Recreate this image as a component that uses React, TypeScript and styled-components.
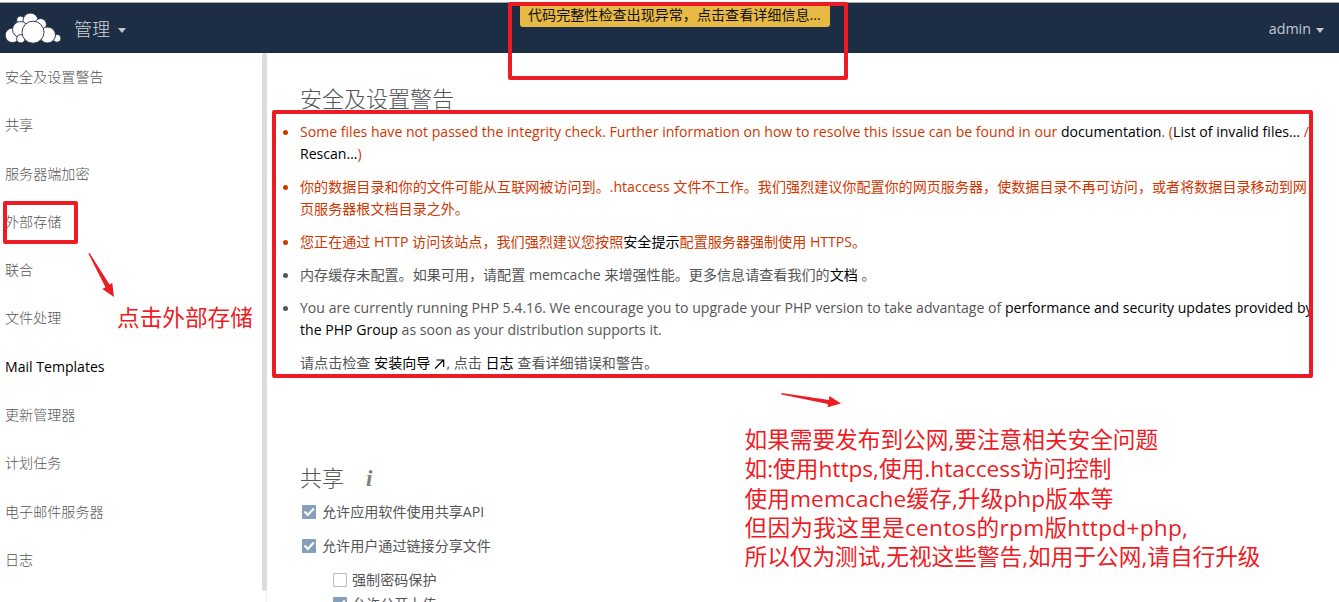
import React from 'react';
import styled, { createGlobalStyle } from 'styled-components';

const RED = '#ed1c24';

const GlobalStyle = createGlobalStyle`
  * { box-sizing: border-box; }
  body {
    margin: 0;
    background: #fff;
    color: #555;
    font-family: 'Open Sans', 'Noto Sans CJK SC', sans-serif;
    font-size: 14.08px;
    line-height: 22px;
    overflow: hidden;
  }
`;

const Page = styled.div`
  position: relative;
  height: 602px;
  overflow: hidden;
  display: flex;
  flex-direction: column;
`;

const Header = styled.header`
  flex: none;
  height: 53px;
  border-top: 2px solid #fff;
  box-shadow: inset 0 1px 0 #a3a7b0;
  background: #1d2d44;
  color: #c3c8d0;
  display: flex;
  align-items: center;
  justify-content: space-between;
  padding: 2px 15px 0 5px;
`;

const Brand = styled.div`
  display: flex;
  align-items: center;
`;

const AppName = styled.span`
  margin-left: 13px;
  font-size: 18px;
  font-weight: 300;
  color: #d3d7dc;
`;

const Caret = styled.i<{ $gap: number }>`
  display: inline-block;
  margin: 3px 0 0 ${(p) => p.$gap}px;
  border: 4.5px solid transparent;
  border-top: 5px solid #c3c8d0;
  border-bottom: 0;
`;

const Account = styled.div`
  display: flex;
  align-items: center;
  font-size: 14.3px;
`;

const Notice = styled.div`
  position: absolute;
  left: 520px;
  top: 3px;
  width: 310px;
  height: 24px;
  padding-left: 8px;
  border-radius: 0 0 3px 3px;
  background: #e8b945;
  color: #111;
  line-height: 24px;
  white-space: nowrap;
`;

const Body = styled.div`
  flex: 1;
  min-height: 0;
  display: flex;
`;

const Sidebar = styled.nav`
  flex: none;
  width: 262px;
  padding: 0 0 0 5px;
`;

const NavItem = styled.div<{ $active?: boolean }>`
  height: 48.3px;
  line-height: 48px;
  font-size: 14.08px;
  font-weight: ${(p) => (p.$active ? 400 : 300)};
  color: ${(p) => (p.$active ? '#000' : '#555')};
`;

const ScrollTrack = styled.div`
  flex: none;
  width: 5px;
  border-right: 1px solid #eee;
`;

const ScrollThumb = styled.div`
  width: 5px;
  height: 538px;
  border-radius: 2px;
  background: #dcdcdc;
`;

const Content = styled.main`
  flex: 1;
  min-width: 0;
  padding: 33px 0 0 33px;
`;

const Heading = styled.h2`
  display: flex;
  align-items: center;
  margin: 0;
  height: 24px;
  font-size: 22px;
  font-weight: 300;
  line-height: 24px;
`;

const Info = styled.span`
  margin: 3px 0 0 22px;
  font: italic bold 23px 'Liberation Serif', serif;
  color: #808080;
`;

const Warnings = styled.ul`
  margin: 11px 0 0;
  padding: 0;
  list-style: none;
`;

const Warning = styled.li<{ $danger?: boolean }>`
  display: flex;
  margin-bottom: 11px;
  color: ${(p) => (p.$danger ? '#ce3702' : '#555')};
  &::before {
    content: '';
    flex: none;
    width: 5px;
    height: 5px;
    margin: 9px 12px 0 -17px;
    border-radius: 50%;
    background: currentColor;
  }
`;

const Line = styled.div<{ $track?: number }>`
  white-space: nowrap;
  letter-spacing: ${(p) => p.$track ?? 0}px;
`;

const Link = styled.a`
  color: #000;
`;

const ArrowGlyph = styled.svg`
  width: 11px;
  height: 10px;
  margin: 0 1px 0 4px;
  vertical-align: -1px;
`;

const Sharing = styled.section`
  margin-top: 91px;
`;

const Option = styled.label<{ $top: number; $indent?: boolean }>`
  display: flex;
  align-items: center;
  height: 22px;
  margin: ${(p) => p.$top}px 0 0 ${(p) => (p.$indent ? 33 : 2)}px;
  gap: ${(p) => (p.$indent ? 5 : 6)}px;
`;

const Box = styled.span<{ $on?: boolean }>`
  flex: none;
  display: flex;
  width: 14px;
  height: 14px;
  border-radius: 1px;
  border: ${(p) => (p.$on ? 'none' : '1px solid #bbb')};
  background: ${(p) => (p.$on ? '#869fba' : '#fff')};
`;

const Frame = styled.div<{ $x: number; $y: number; $w: number; $h: number }>`
  position: absolute;
  left: ${(p) => p.$x}px;
  top: ${(p) => p.$y}px;
  width: ${(p) => p.$w}px;
  height: ${(p) => p.$h}px;
  border: 4px solid ${RED};
  border-radius: 2px;
`;

const Note = styled.div<{ $x: number; $y: number }>`
  position: absolute;
  left: ${(p) => p.$x}px;
  top: ${(p) => p.$y}px;
  color: ${RED};
  font-size: 22.67px;
  line-height: 29.33px;
`;

const Pointers = styled.svg`
  position: absolute;
  left: 0;
  top: 0;
  pointer-events: none;
`;

function Check({ on }: { on?: boolean }) {
  return (
    <Box $on={on}>
      {on && (
        <svg width="14" height="14" viewBox="0 0 14 14">
          <path d="M2.5 6.5 5.8 10 11.8 3.6" fill="none" stroke="#fff" strokeWidth="2.2" />
        </svg>
      )}
    </Box>
  );
}

function CloudLogo() {
  const puffs: [number, number, number][] = [
    [15.5, 7, 3.9], [25.5, 7.5, 7.5], [35.5, 11.5, 6],
    [7.5, 22.3, 7.3], [15.5, 16.5, 8], [15.8, 25.8, 4.1],
    [52, 25.3, 4], [42.5, 22, 8], [28, 19.2, 11],
  ];
  return (
    <svg width="56" height="31" viewBox="0 0 56 31">
      {puffs.map(([x, y, r]) => (
        <circle key={`${x}-${y}`} cx={x} cy={y} r={r} fill="#fff" stroke="#1d2d44" strokeWidth="0.9" />
      ))}
    </svg>
  );
}

const navItems = [
  '安全及设置警告', '共享', '服务器端加密', '外部存储', '联合', '文件处理',
  'Mail Templates', '更新管理器', '计划任务', '电子邮件服务器', '日志',
];

const noteLines: [string, number][] = [
  ['如果需要发布到公网,要注意相关安全问题', 0],
  ['如:使用https,使用.htaccess访问控制', 0],
  ['使用memcache缓存,升级php版本等', 0.1],
  ['但因为我这里是centos的rpm版httpd+php,', 0.27],
  ['所以仅为测试,无视这些警告,如用于公网,请自行升级', 0],
];

export default function App() {
  return (
    <Page>
      <GlobalStyle />
      <Header>
        <Brand>
          <CloudLogo />
          <AppName>管理</AppName>
          <Caret $gap={8} />
        </Brand>
        <Account>
          admin
          <Caret $gap={5} />
        </Account>
      </Header>
      <Notice>代码完整性检查出现异常，点击查看详细信息...</Notice>

      <Body>
        <Sidebar>
          {navItems.map((item) => (
            <NavItem key={item} $active={item === 'Mail Templates'}>{item}</NavItem>
          ))}
        </Sidebar>
        <ScrollTrack><ScrollThumb /></ScrollTrack>
        <Content>
          <Heading>安全及设置警告</Heading>
          <Warnings>
            <Warning $danger>
              <div>
                <Line>
                  Some files have not passed the integrity check. Further information on how to resolve this issue can be found in our{' '}
                  <Link>documentation</Link>. (<Link>List of invalid files…</Link> /
                </Line>
                <Line><Link>Rescan…</Link>)</Line>
              </div>
            </Warning>
            <Warning $danger>
              <div>
                <Line>你的数据目录和你的文件可能从互联网被访问到。.htaccess 文件不工作。我们强烈建议你配置你的网页服务器，使数据目录不再可访问，或者将数据目录移动到网</Line>
                <Line>页服务器根文档目录之外。</Line>
              </div>
            </Warning>
            <Warning $danger>
              <Line>您正在通过 HTTP 访问该站点，我们强烈建议您按照<Link>安全提示</Link>配置服务器强制使用 HTTPS。</Line>
            </Warning>
            <Warning>
              <Line>内存缓存未配置。如果可用，请配置 memcache 来增强性能。更多信息请查看我们的<Link>文档</Link> 。</Line>
            </Warning>
            <Warning>
              <div>
                <Line>
                  You are currently running PHP 5.4.16. We encourage you to upgrade your PHP version to take advantage of{' '}
                  <Link>performance and security updates provided by</Link>
                </Line>
                <Line><Link>the PHP Group</Link> as soon as your distribution supports it.</Line>
              </div>
            </Warning>
          </Warnings>
          <Line>
            请点击检查 <Link>安装向导
              <ArrowGlyph viewBox="0 0 11 10">
                <path d="M1 9.5 9.5 1M2.5 1H9.7V8" fill="none" stroke="#000" strokeWidth="1.2" />
              </ArrowGlyph>
            </Link>, 点击 <Link>日志</Link> 查看详细错误和警告。
          </Line>

          <Sharing>
            <Heading>共享<Info>i</Info></Heading>
            <Option $top={12}><Check on />允许应用软件使用共享API</Option>
            <Option $top={12}><Check on />允许用户通过链接分享文件</Option>
            <Option $top={12} $indent><Check />强制密码保护</Option>
            <Option $top={2} $indent><Check on />允许公开上传</Option>
          </Sharing>
        </Content>
      </Body>

      <Frame $x={508} $y={2} $w={340} $h={78} />
      <Frame $x={272} $y={110} $w={1041} $h={268} />
      <Frame $x={3} $y={201} $w={75} $h={43} />
      <Note $x={117} $y={303}>
        <Line>点击外部存储</Line>
      </Note>
      <Note $x={744.5} $y={425}>
        {noteLines.map(([text, track]) => (
          <Line key={text} $track={track}>{text}</Line>
        ))}
      </Note>
      <Pointers width="1339" height="602" fill={RED}>
        <path d="M88.3 253.5 89.5 253 109.5 284.5 112.3 283 114 297 102.3 289 105.5 287.2Z" />
        <path d="M781.5 393 829 400 829.3 396 841 403.5 827.5 407.3 828 404 781.5 394.5Z" />
      </Pointers>
    </Page>
  );
}
